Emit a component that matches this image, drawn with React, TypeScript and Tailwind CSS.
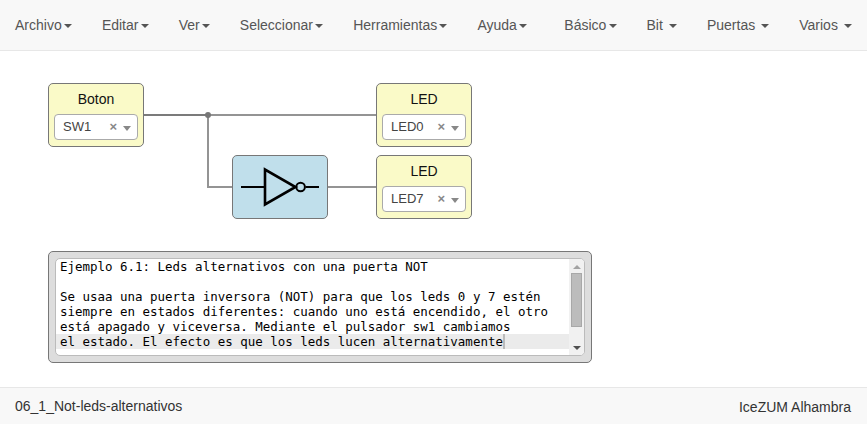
const leftMenu = ["Archivo", "Editar", "Ver", "Seleccionar", "Herramientas", "Ayuda"];
const rightMenu = ["Básico", "Bit ", "Puertas ", "Varios "];

function MenuItem({ label }: { label: string }) {
  return (
    <li className="flex items-center px-[15px] whitespace-pre">
      <span>{label}</span>
      <span className="mt-px ml-[2.2px] h-0 w-0 border-x-4 border-t-4 border-x-transparent border-t-[#555]" />
    </li>
  );
}

function IoBlock({ title, value, place }: { title: string; value: string; place: string }) {
  return (
    <div
      className={`absolute flex h-16 w-24 flex-col rounded-[5px] border border-[#777] bg-[#fafac8] px-[5px] ${place}`}
    >
      <div className="h-[30px] text-center text-[14px] leading-[31px] text-[#111]">{title}</div>
      <div className="flex h-[26px] items-center rounded-[4px] border border-[#aaa] bg-white pl-2 text-[13px] text-[#444]">
        <span className="flex-1 leading-6">{value}</span>
        <span className="mr-[6px] font-bold leading-6 text-[#888]">×</span>
        <span className="mt-[3px] mr-[6px] h-0 w-0 border-x-4 border-t-5 border-x-transparent border-t-[#888]" />
      </div>
    </div>
  );
}

const noteLines = [
  "Ejemplo 6.1: Leds alternativos con una puerta NOT",
  "",
  "Se usaa una puerta inversora (NOT) para que los leds 0 y 7 estén",
  "siempre en estados diferentes: cuando uno está encendido, el otro",
  "está apagado y viceversa. Mediante el pulsador sw1 cambiamos",
];

export default function App() {
  return (
    <div className="flex h-[424px] w-[867px] flex-col overflow-hidden bg-white font-['Liberation_Sans',Arial,sans-serif] text-[14px] text-[#333]">
      <nav className="flex h-[51px] shrink-0 justify-between border-b border-[#e7e7e7] bg-[#f8f8f8] text-[#555]">
        <ul className="flex">
          {leftMenu.map((m) => (
            <MenuItem key={m} label={m} />
          ))}
        </ul>
        <ul className="flex">
          {rightMenu.map((m) => (
            <MenuItem key={m} label={m} />
          ))}
        </ul>
      </nav>

      <main className="relative flex-1">
        <svg className="absolute inset-0" width="867" height="336" viewBox="0 51 867 336" fill="none">
          <path d="M144 115H376M208 115V187H232M328 187H376" stroke="#949494" strokeWidth="2" />
          <path d="M144 115H208" stroke="#7b7b7b" strokeWidth="2" />
          <circle cx="208" cy="115" r="3" fill="#777" />
        </svg>
        <IoBlock title="Boton" value="SW1" place="left-12 top-8" />
        <IoBlock title="LED" value="LED0" place="left-[376px] top-8" />
        <IoBlock title="LED" value="LED7" place="left-[376px] top-[104px]" />

        <div className="absolute top-[104px] left-[232px] h-16 w-24 rounded-[5px] border border-[#777] bg-[#c0dfeb]">
          <svg width="94" height="62" viewBox="233 156 94 62" fill="none" stroke="#000">
            <path d="M241 187H265M305.5 187H319" strokeWidth="1.8" />
            <path d="M265 169.5V204.5L295.5 187Z" strokeWidth="2.6" />
            <circle cx="300.6" cy="187" r="4.3" strokeWidth="2" />
          </svg>
        </div>

        <section className="absolute top-[200px] left-12 h-28 w-[544px] rounded-[5px] border border-[#777] bg-[#ddd] px-[6px] pt-[6px]">
          <div className="flex h-[98px] overflow-hidden rounded-[5px] border border-[#bbb] bg-white">
            <div className="flex-1 font-['DejaVu_Sans_Mono',monospace] text-[12.47px] leading-[15px] whitespace-pre text-black">
              {noteLines.map((line, i) => (
                <div key={i} className="h-[15px] pl-1">
                  {line}
                </div>
              ))}
              <div className="flex h-[15px] bg-[#ebebeb] pl-1">
                <span>el estado. El efecto es que los leds lucen alternativamente</span>
                <span className="w-[2px] bg-[#bbb]" />
              </div>
            </div>
            <div className="flex w-[15px] flex-col items-center bg-[#f1f1f1]">
              <div className="mt-[6px] h-0 w-0 border-x-4 border-b-4 border-x-transparent border-b-[#a3a3a3]" />
              <div className="mt-1 h-[54px] w-[11px] border border-[#a8a8a8] bg-[#bcbcbc]" />
              <div className="mt-[19px] h-0 w-0 border-x-4 border-t-4 border-x-transparent border-t-[#505050]" />
            </div>
          </div>
        </section>
      </main>

      <footer className="flex h-[37px] shrink-0 justify-between border-t border-[#e7e7e7] bg-[#f8f8f8] px-[15px]">
        <span className="leading-9">06_1_Not-leds-alternativos</span>
        <span className="mr-px leading-[38px]">IceZUM Alhambra</span>
      </footer>
    </div>
  );
}
